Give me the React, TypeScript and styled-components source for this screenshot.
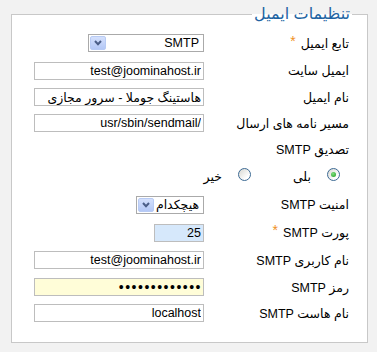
import styled, { createGlobalStyle } from 'styled-components'

const GlobalStyle = createGlobalStyle`
  html, body {
    margin: 0;
    padding: 0;
    background: #f2f2f2;
  }
  body {
    font-family: "Liberation Sans", "DejaVu Sans", sans-serif;
    font-size: 12px;
    color: #000;
  }
`

const Page = styled.div`
  direction: rtl;
  width: 377px;
  height: 352px;
  box-sizing: border-box;
  padding: 6px 9px 0 11px;
`

const Panel = styled.fieldset`
  margin: 0;
  min-width: 0;
  border: 1px solid #c8c8c8;
  background: #fff;
  padding: 7px 15px 16px 22px;
`

const Legend = styled.legend`
  padding: 0 2px;
  font-size: 16px;
  line-height: 16px;
  color: #2163a2;
`

const Row = styled.div<{ $h: number }>`
  display: grid;
  grid-template-columns: 148px 170px;
  align-items: center;
  height: ${(p) => p.$h}px;
`

const Label = styled.label`
  padding-right: 3px;
  white-space: nowrap;
  font-size: 12.5px;
`

const Star = styled.span`
  color: #f0901c;
  font-size: 14px;
  line-height: 10px;
  vertical-align: top;
  margin-right: 5px;
`

const Field = styled.input<{ $w?: number; $bg?: string }>`
  justify-self: start;
  box-sizing: border-box;
  width: ${(p) => p.$w ?? 170}px;
  height: 18px;
  margin: 0;
  padding: 0 2px;
  border: 1px solid #bdbdbd;
  background: ${(p) => p.$bg ?? '#fff'};
  font-family: inherit;
  font-size: 12.5px;
  color: #000;
  direction: rtl;
  outline: none;
  &[type='password'] {
    font-size: 14px;
    letter-spacing: 1.5px;
    padding-right: 1px;
  }
`

const Select = styled.div<{ $w: number }>`
  justify-self: start;
  display: flex;
  align-items: center;
  box-sizing: border-box;
  width: ${(p) => p.$w}px;
  height: 18px;
  padding: 0 4px 0 1px;
  border: 1px solid #aaaaaa;
  background: #fff;
  font-size: 12.5px;
`

const SelectText = styled.span`
  flex: 1;
  white-space: nowrap;
`

const DropButton = styled.span`
  display: flex;
  align-items: center;
  justify-content: center;
  box-sizing: border-box;
  width: 16px;
  height: 14px;
  border: 1px solid #b8cbf4;
  border-radius: 2px;
  background: linear-gradient(#d4e0fc, #b4c8f6);
`

const RadioGroup = styled.div`
  grid-column: 1 / -1;
  display: flex;
  align-items: center;
  gap: 42px;
  padding-right: 12px;
  margin-top: -4px;
`

const RadioItem = styled.label`
  display: flex;
  align-items: center;
  gap: 16px;
`

const RadioText = styled.span`
  padding-top: 5px;
  font-size: 12.5px;
`

const RadioDot = styled.span<{ $on?: boolean }>`
  display: flex;
  align-items: center;
  justify-content: center;
  box-sizing: border-box;
  width: 13px;
  height: 13px;
  border-radius: 50%;
  border: 1px solid #3d6a94;
  background: linear-gradient(135deg, #d8d8d2, #ffffff 75%);
  &::after {
    content: '';
    width: 5px;
    height: 5px;
    border-radius: 50%;
    background: ${(p) => (p.$on ? 'radial-gradient(circle at 40% 35%, #7fe07f, #1f9a1f)' : 'transparent')};
  }
`

const Chevron = () => (
  <svg width="8" height="6" viewBox="0 0 8 6">
    <polyline points="1,1 4,4.2 7,1" fill="none" stroke="#4b5e88" strokeWidth="2" />
  </svg>
)

const Dropdown = ({ value, width }: { value: string; width: number }) => (
  <Select $w={width}>
    <SelectText>{value}</SelectText>
    <DropButton>
      <Chevron />
    </DropButton>
  </Select>
)

export default function App() {
  return (
    <Page>
      <GlobalStyle />
      <Panel>
        <Legend>تنظیمات ایمیل</Legend>
        <Row $h={28}>
          <Label>
            تابع ایمیل<Star>*</Star>
          </Label>
          <Dropdown value="SMTP" width={116} />
        </Row>
        <Row $h={27}>
          <Label>ایمیل سایت</Label>
          <Field readOnly value="test@joominahost.ir" />
        </Row>
        <Row $h={26}>
          <Label>نام ایمیل</Label>
          <Field readOnly value="هاستینگ جوملا - سرور مجازی" />
        </Row>
        <Row $h={26}>
          <Label>مسیر نامه های ارسال</Label>
          <Field readOnly value="/usr/sbin/sendmail" />
        </Row>
        <Row $h={26}>
          <Label>تصدیق SMTP</Label>
        </Row>
        <Row $h={28}>
          <RadioGroup>
            <RadioItem>
              <RadioDot $on />
              <RadioText>بلی</RadioText>
            </RadioItem>
            <RadioItem>
              <RadioDot />
              <RadioText>خیر</RadioText>
            </RadioItem>
          </RadioGroup>
        </Row>
        <Row $h={29}>
          <Label>امنیت SMTP</Label>
          <Dropdown value="هیچکدام" width={68} />
        </Row>
        <Row $h={27}>
          <Label>
            پورت SMTP<Star>*</Star>
          </Label>
          <Field readOnly value="25" $w={50} $bg="#d6e8fb" />
        </Row>
        <Row $h={28}>
          <Label>نام کاربری SMTP</Label>
          <Field readOnly value="test@joominahost.ir" />
        </Row>
        <Row $h={26}>
          <Label>رمز SMTP</Label>
          <Field readOnly type="password" value="joominahost12" $bg="#fffdd8" />
        </Row>
        <Row $h={26}>
          <Label>نام هاست SMTP</Label>
          <Field readOnly value="localhost" />
        </Row>
      </Panel>
    </Page>
  )
}
